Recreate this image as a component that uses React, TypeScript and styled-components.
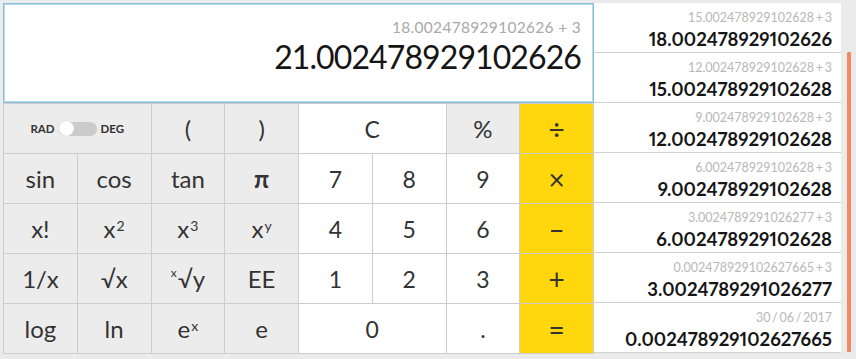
import React from 'react';
import styled, { createGlobalStyle } from 'styled-components';

const GlobalStyle = createGlobalStyle`
  html, body {
    margin: 0;
    padding: 0;
    background: #ebebeb;
  }
  body {
    font-family: Lato, "Open Sans", "Liberation Sans", sans-serif;
    color: #222;
  }
`;

const Page = styled.div`
  display: flex;
  height: 359px;
  padding: 3px 0 0 3px;
  box-sizing: border-box;
  overflow: hidden;
`;

const CalcColumn = styled.div`
  width: 591px;
  display: flex;
  flex-direction: column;
`;

const Display = styled.div`
  height: 100px;
  box-sizing: border-box;
  background: #fff;
  border: 1px solid #86bfdd;
  box-shadow: inset 0 0 0 1px #b9dbec;
  display: flex;
  flex-direction: column;
  align-items: flex-end;
  padding: 15px 12px 0 0;
`;

const Expression = styled.div`
  font-size: 15.5px;
  line-height: 16px;
  letter-spacing: 0.3px;
  color: #a9a9a9;
`;

const Result = styled.div`
  font-size: 32px;
  font-weight: 400;
  line-height: 40px;
  margin-top: 2px;
  letter-spacing: -0.9px;
  color: #151515;
`;

const Keypad = styled.div`
  display: grid;
  grid-template-columns: repeat(8, 1fr);
  grid-auto-rows: 49px;
  gap: 1px;
  padding: 1px;
  background: #cdcdcd;
`;

type Tone = 'fn' | 'num' | 'op';

const toneBg: Record<Tone, string> = {
  fn: '#ececec',
  num: '#ffffff',
  op: '#ffd70c',
};

const toneSize: Record<Tone, string> = {
  fn: '24px',
  num: '23px',
  op: '28px',
};

const Key = styled.button<{ $tone: Tone; $span?: number }>`
  grid-column: span ${p => p.$span ?? 1};
  border: 0;
  margin: 0;
  padding: 0;
  background: ${p => toneBg[p.$tone]};
  font-family: Lato, "Open Sans", sans-serif;
  font-size: ${p => toneSize[p.$tone]};
  color: #333;
  display: flex;
  align-items: center;
  justify-content: center;
  cursor: pointer;

  sup {
    font-size: 14px;
    line-height: 0;
    position: relative;
    top: -3px;
    margin-left: 1px;
  }
`;

const SmallPre = styled.span`
  font-size: 12px;
  margin-right: 1px;
  position: relative;
  top: -6px;
`;

const Pi = styled.span`
  font-weight: 700;
  font-size: 24px;
`;

const ModeSwitch = styled.div`
  display: flex;
  align-items: center;
  gap: 4px;
  font-size: 11.5px;
  font-weight: 700;
  color: #333;
`;

const Track = styled.div`
  width: 38px;
  height: 14px;
  border-radius: 7px;
  background: #cbcbcb;
  display: flex;
  align-items: center;
`;

const Knob = styled.div`
  width: 15px;
  height: 15px;
  border-radius: 50%;
  background: #fff;
  box-shadow: 0 0 1px rgba(0, 0, 0, 0.2);
`;

const HistoryPanel = styled.div`
  width: 247px;
  height: 350px;
  background: #fff;
  display: flex;
  flex-direction: column;
`;

const HistoryItem = styled.div`
  height: 42px;
  flex-shrink: 0;
  border-bottom: 1px solid #d2d2d2;
  display: flex;
  flex-direction: column;
  align-items: flex-end;
  padding: 7px 9px 0 0;
`;

const HistoryExpr = styled.div`
  font-size: 12.5px;
  line-height: 15px;
  word-spacing: -1.5px;
  color: #b8b8b8;
`;

const HistoryValue = styled.div`
  font-size: 18.5px;
  font-weight: 700;
  line-height: 22px;
  margin-top: 3px;
  font-variant-numeric: proportional-nums;
  color: #161616;
`;

const ScrollTrack = styled.div`
  width: 15px;
  margin-top: -3px;
  padding-top: 52px;
  display: flex;
  justify-content: center;
`;

const ScrollThumb = styled.div`
  width: 4px;
  height: 300px;
  margin-left: 1px;
  border-radius: 1px;
  background: #ef8b62;
`;

const history = [
  { expr: '15.002478929102628 + 3', value: '18.002478929102626' },
  { expr: '12.002478929102628 + 3', value: '15.002478929102628' },
  { expr: '9.002478929102628 + 3', value: '12.002478929102628' },
  { expr: '6.002478929102628 + 3', value: '9.002478929102628' },
  { expr: '3.0024789291026277 + 3', value: '6.002478929102628' },
  { expr: '0.002478929102627665 + 3', value: '3.0024789291026277' },
  { expr: '30 / 06 / 2017', value: '0.002478929102627665' },
];

export default function App() {
  return (
    <>
      <GlobalStyle />
      <Page>
        <CalcColumn>
          <Display>
            <Expression>18.002478929102626 + 3</Expression>
            <Result>21.002478929102626</Result>
          </Display>
          <Keypad>
            <Key $tone="fn" $span={2}>
              <ModeSwitch>
                RAD
                <Track>
                  <Knob />
                </Track>
                DEG
              </ModeSwitch>
            </Key>
            <Key $tone="fn">(</Key>
            <Key $tone="fn">)</Key>
            <Key $tone="num" $span={2}>C</Key>
            <Key $tone="fn">%</Key>
            <Key $tone="op">÷</Key>

            <Key $tone="fn">sin</Key>
            <Key $tone="fn">cos</Key>
            <Key $tone="fn">tan</Key>
            <Key $tone="fn"><Pi>π</Pi></Key>
            <Key $tone="num">7</Key>
            <Key $tone="num">8</Key>
            <Key $tone="num">9</Key>
            <Key $tone="op">×</Key>

            <Key $tone="fn">x!</Key>
            <Key $tone="fn">x<sup>2</sup></Key>
            <Key $tone="fn">x<sup>3</sup></Key>
            <Key $tone="fn">x<sup>y</sup></Key>
            <Key $tone="num">4</Key>
            <Key $tone="num">5</Key>
            <Key $tone="num">6</Key>
            <Key $tone="op">–</Key>

            <Key $tone="fn">1/x</Key>
            <Key $tone="fn">√x</Key>
            <Key $tone="fn"><SmallPre>x</SmallPre>√y</Key>
            <Key $tone="fn">EE</Key>
            <Key $tone="num">1</Key>
            <Key $tone="num">2</Key>
            <Key $tone="num">3</Key>
            <Key $tone="op">+</Key>

            <Key $tone="fn">log</Key>
            <Key $tone="fn">ln</Key>
            <Key $tone="fn">e<sup>x</sup></Key>
            <Key $tone="fn">e</Key>
            <Key $tone="num" $span={2}>0</Key>
            <Key $tone="num">.</Key>
            <Key $tone="op">=</Key>
          </Keypad>
        </CalcColumn>
        <HistoryPanel>
          {history.map(h => (
            <HistoryItem key={h.value}>
              <HistoryExpr>{h.expr}</HistoryExpr>
              <HistoryValue>{h.value}</HistoryValue>
            </HistoryItem>
          ))}
        </HistoryPanel>
        <ScrollTrack>
          <ScrollThumb />
        </ScrollTrack>
      </Page>
    </>
  );
}
